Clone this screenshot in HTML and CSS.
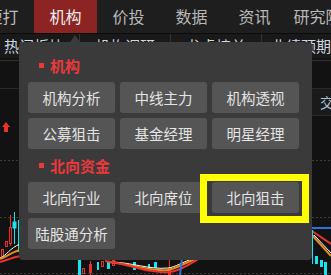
FILE: index.html
```html
<!DOCTYPE html>
<html lang="zh">
<head>
    <meta charset="UTF-8">
    <meta name="viewport" content="width=device-width, initial-scale=1.0">
    <title>机构</title>
    <link rel="stylesheet" href="styles.css">
</head>
<body>

<div class="screen">
    <div class="nav">
        <div class="nav-item">短打</div>
        <div class="nav-item active">机构</div>
        <div class="nav-item">价投</div>
        <div class="nav-item">数据</div>
        <div class="nav-item">资讯</div>
        <div class="nav-item">研究院</div>
    </div>

    <div class="subnav">
        <div class="sub-item first">热门板块</div>
        <div class="sub-item">机构调研</div>
        <div class="sub-item">龙虎榜单</div>
        <div class="sub-item last">业绩预期</div>
    </div>

    <svg class="chart" width="331" height="217" viewBox="0 58 331 217">
        <rect x="0" y="58" width="331" height="217" fill="#121212" />
        <line x1="0" y1="60.5" x2="331" y2="60.5" stroke="#343434" />
        <line x1="0" y1="88.5" x2="331" y2="88.5" stroke="#2a2a2a" />
        <line x1="300" y1="115.5" x2="331" y2="115.5" stroke="#2a2a2a" />
        <rect x="300" y="89" width="31" height="26" fill="#1a1a1a" />
        <text x="320" y="108" fill="#a9c4d8" font-size="14" font-family="Noto Sans CJK SC, sans-serif">交</text>
        <g stroke="#3a3a3a" stroke-dasharray="2 2">
            <line x1="0" y1="160.5" x2="331" y2="160.5" />
            <line x1="0" y1="217.5" x2="331" y2="217.5" />
            <line x1="0" y1="273.5" x2="331" y2="273.5" />
        </g>
        <!-- arrow -->
        <path d="M6 122 L10 127 L8 127 L8 132 L4 132 L4 127 L2 127 Z" fill="#e8322f" />

        <!-- left candles -->
        <g stroke="#e8322f" fill="none">
            <rect x="1.5" y="249.5" width="2" height="7" />
            <rect x="5.5" y="241.5" width="2" height="5" />
            <line x1="10.5" y1="215" x2="10.5" y2="246" />
            <rect x="9.5" y="227.5" width="2" height="16" fill="#121212" />
        </g>
        <g stroke="#19e3ee" fill="#19e3ee">
            <line x1="14.5" y1="212" x2="14.5" y2="244" />
            <rect x="13" y="222" width="3" height="6" />
            <line x1="18.5" y1="220" x2="18.5" y2="252" />
        </g>
        <path d="M0 258 C6 256 10 248 20 244" stroke="#ffffff" fill="none" />
        <path d="M0 259 C6 257 12 252 20 250" stroke="#e98b1c" stroke-width="2" fill="none" />
        <path d="M0 262 C8 260 14 257 20 256" stroke="#e8322f" stroke-width="2" fill="none" />

        <!-- bottom candles -->
        <g fill="#19e3ee">
            <rect x="78" y="260" width="3" height="15" />
            <rect x="97" y="262" width="2" height="8" />
            <rect x="107" y="262" width="3" height="7" />
            <rect x="133" y="262" width="3" height="8" />
            <rect x="148" y="264" width="2" height="6" />
            <rect x="154" y="262" width="3" height="6" />
        </g>
        <g stroke="#e8322f" fill="none">
            <rect x="82.5" y="268.5" width="2" height="5" />
            <rect x="89.5" y="264.5" width="2" height="8" />
            <line x1="90.5" y1="261" x2="90.5" y2="275" />
            <rect x="101.5" y="261.5" width="2" height="5" />
            <rect x="112.5" y="260.5" width="2" height="5" />
            <rect x="168.5" y="268.5" width="2" height="6" />
            <line x1="169.5" y1="260" x2="169.5" y2="275" />
        </g>
        <path d="M110 262 C130 262 150 270 168 268 C176 267 182 262 195 258" stroke="#ffffff" fill="none" />
        <path d="M108 262 C128 263 150 272 168 270 C176 269 186 262 198 258" stroke="#e98b1c" stroke-width="2" fill="none" />
        <path d="M105 261 C125 263 150 274 170 272 C180 271 190 264 200 258" stroke="#e8322f" stroke-width="2" fill="none" />
        <line x1="182" y1="258" x2="180" y2="275" stroke="#2f6fe0" stroke-width="2" />

        <!-- right side -->
        <line x1="312" y1="228" x2="331" y2="228" stroke="#2f6fe0" stroke-width="2" />
        <line x1="312" y1="231" x2="331" y2="244" stroke="#e8322f" stroke-width="2" />
        <line x1="312" y1="235" x2="331" y2="256" stroke="#e98b1c" stroke-width="2" />
        <line x1="314" y1="235" x2="331" y2="253" stroke="#ffffff" />
        <line x1="312.5" y1="230" x2="312.5" y2="264" stroke="#19e3ee" />
        <g fill="#19e3ee">
            <rect x="315" y="256" width="3" height="8" />
            <rect x="320" y="260" width="3" height="7" />
            <rect x="324" y="262" width="3" height="13" />
        </g>
    </svg>

    <div class="popup">
        <div class="group-title">机构</div>
        <div class="btn-grid">
            <div class="btn">机构分析</div>
            <div class="btn">中线主力</div>
            <div class="btn">机构透视</div>
            <div class="btn">公募狙击</div>
            <div class="btn">基金经理</div>
            <div class="btn">明星经理</div>
        </div>
        <div class="group-title">北向资金</div>
        <div class="btn-grid">
            <div class="btn">北向行业</div>
            <div class="btn">北向席位</div>
            <div class="btn marked">北向狙击</div>
            <div class="btn">陆股通分析</div>
        </div>
    </div>
</div>

</body>
</html>
```

FILE: styles.css
```css
body {
    margin: 0;
    padding: 0;
    background-color: #121212;
    font-family: "Noto Sans CJK SC", "Noto Sans", sans-serif;
}

.screen {
    position: relative;
    width: 331px;
    height: 275px;
    overflow: hidden;
}

.nav {
    display: flex;
    height: 33px;
    background-color: #1e1e1e;
    border-bottom: 1px solid #0a0a0a;
    margin-left: -29px;
}

.nav-item {
    flex: 0 0 63px;
    line-height: 33px;
    text-align: center;
    font-size: 16px;
    color: #b9b9b9;
}

.nav-item.active {
    background-color: #8b2423;
    color: #eeeeee;
}

.subnav {
    display: flex;
    height: 24px;
    background-color: #191919;
}

.sub-item {
    flex: 0 0 90px;
    line-height: 24px;
    font-size: 15px;
    color: #cfd8e0;
    border-right: 1px solid #333;
    white-space: nowrap;
    overflow: hidden;
    text-align: center;
}

.sub-item.first {
    flex-basis: 80px;
    text-align: left;
    padding-left: 4px;
    box-sizing: border-box;
}

.sub-item.last {
    flex: 1;
    border-right: none;
    text-align: right;
}

.chart {
    display: block;
}

.popup {
    position: absolute;
    left: 19px;
    top: 42px;
    width: 293px;
    box-sizing: border-box;
    padding: 7px 13px 11px 9px;
    background-color: #3a3a3a;
    border-radius: 4px;
}

.popup::before {
    content: "";
    position: absolute;
    left: 51px;
    top: -7px;
    border-left: 5px solid transparent;
    border-right: 5px solid transparent;
    border-bottom: 7px solid #3a3a3a;
}

.group-title {
    display: flex;
    align-items: center;
    height: 33px;
    padding-left: 11px;
    font-size: 15px;
    font-weight: bold;
    color: #ec383c;
}

.group-title::before {
    content: "";
    width: 5px;
    height: 5px;
    margin-right: 6px;
    background-color: #ec383c;
}

.btn-grid {
    display: grid;
    grid-template-columns: repeat(3, 87px);
    grid-auto-rows: 31px;
    gap: 5px;
}

.btn {
    position: relative;
    display: flex;
    align-items: center;
    justify-content: center;
    background-color: #555555;
    border-radius: 3px;
    font-size: 14.5px;
    color: #e4e4e4;
}

.btn.marked::after {
    content: "";
    position: absolute;
    top: -8px;
    right: -10px;
    bottom: -10px;
    left: -12px;
    border: 7px solid #ffff00;
}
```
